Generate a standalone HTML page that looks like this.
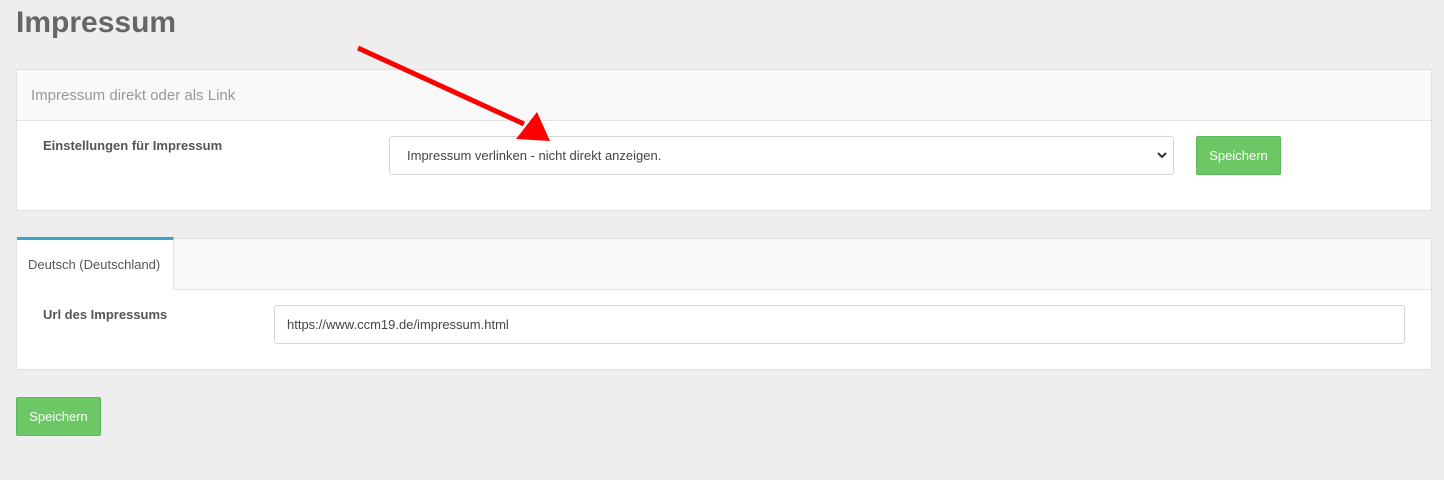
<!DOCTYPE html><html><head><style>
body{margin:0;width:1444px;height:480px;background:#eeeeee;font-family:"Liberation Sans",sans-serif;position:relative;overflow:hidden}
.a{position:absolute}
h1{position:absolute;left:16px;top:6px;margin:0;font-size:30px;font-weight:bold;color:#666}
.panel{background:#fff;border:1px solid #e0e0e0;box-sizing:border-box;border-radius:2px}
.lab{font-size:13px;font-weight:bold;color:#555}
.field{background:#fff;border:1px solid #d2d6de;border-radius:3px;box-sizing:border-box;font-size:13px;color:#444;padding-left:17px;line-height:37px}
.btn{background:#6cc864;border:1px solid #5cb85c;border-radius:2px;color:#fff;font-size:13px;text-align:center;box-sizing:border-box;line-height:37px}
</style></head><body>
<h1>Impressum</h1>
<div class="a panel" style="left:16px;top:69px;width:1416px;height:142px"></div>
<div class="a" style="left:17px;top:70px;width:1414px;height:50px;background:#f9f9f9;border-bottom:1px solid #e3e3e3"></div>
<div class="a" style="left:31px;top:87px;font-size:15px;color:#999">Impressum direkt oder als Link</div>
<div class="a lab" style="left:43px;top:138px">Einstellungen für Impressum</div>
<div class="a field" style="left:389px;top:136px;width:785px;height:39px">Impressum verlinken - nicht direkt anzeigen.</div>
<svg class="a" style="left:1156px;top:150px" width="12" height="10"><path d="M2 3l4 4 4-4" stroke="#333" stroke-width="2" fill="none"/></svg>
<div class="a btn" style="left:1196px;top:136px;width:85px;height:39px">Speichern</div>
<div class="a panel" style="left:16px;top:238px;width:1416px;height:132px"></div>
<div class="a" style="left:17px;top:239px;width:1414px;height:50px;background:#f9f9f9;border-bottom:1px solid #e3e3e3"></div>
<div class="a" style="left:17px;top:237px;width:157px;height:53px;background:#fff;border-top:3px solid #3aa3c8;border-right:1px solid #e3e3e3;box-sizing:border-box"></div>
<div class="a" style="left:28px;top:257px;font-size:13px;color:#555">Deutsch (Deutschland)</div>
<div class="a lab" style="left:43px;top:307px">Url des Impressums</div>
<div class="a field" style="left:274px;top:305px;width:1131px;height:39px;padding-left:12px">https://www.ccm19.de/impressum.html</div>
<div class="a btn" style="left:16px;top:397px;width:85px;height:39px">Speichern</div>
<svg class="a" style="left:0;top:0" width="1444" height="480"><line x1="358" y1="48" x2="524" y2="124" stroke="#f00" stroke-width="5"/><polygon points="550,141 516,139 537,112" fill="#f00"/></svg>
</body></html>
